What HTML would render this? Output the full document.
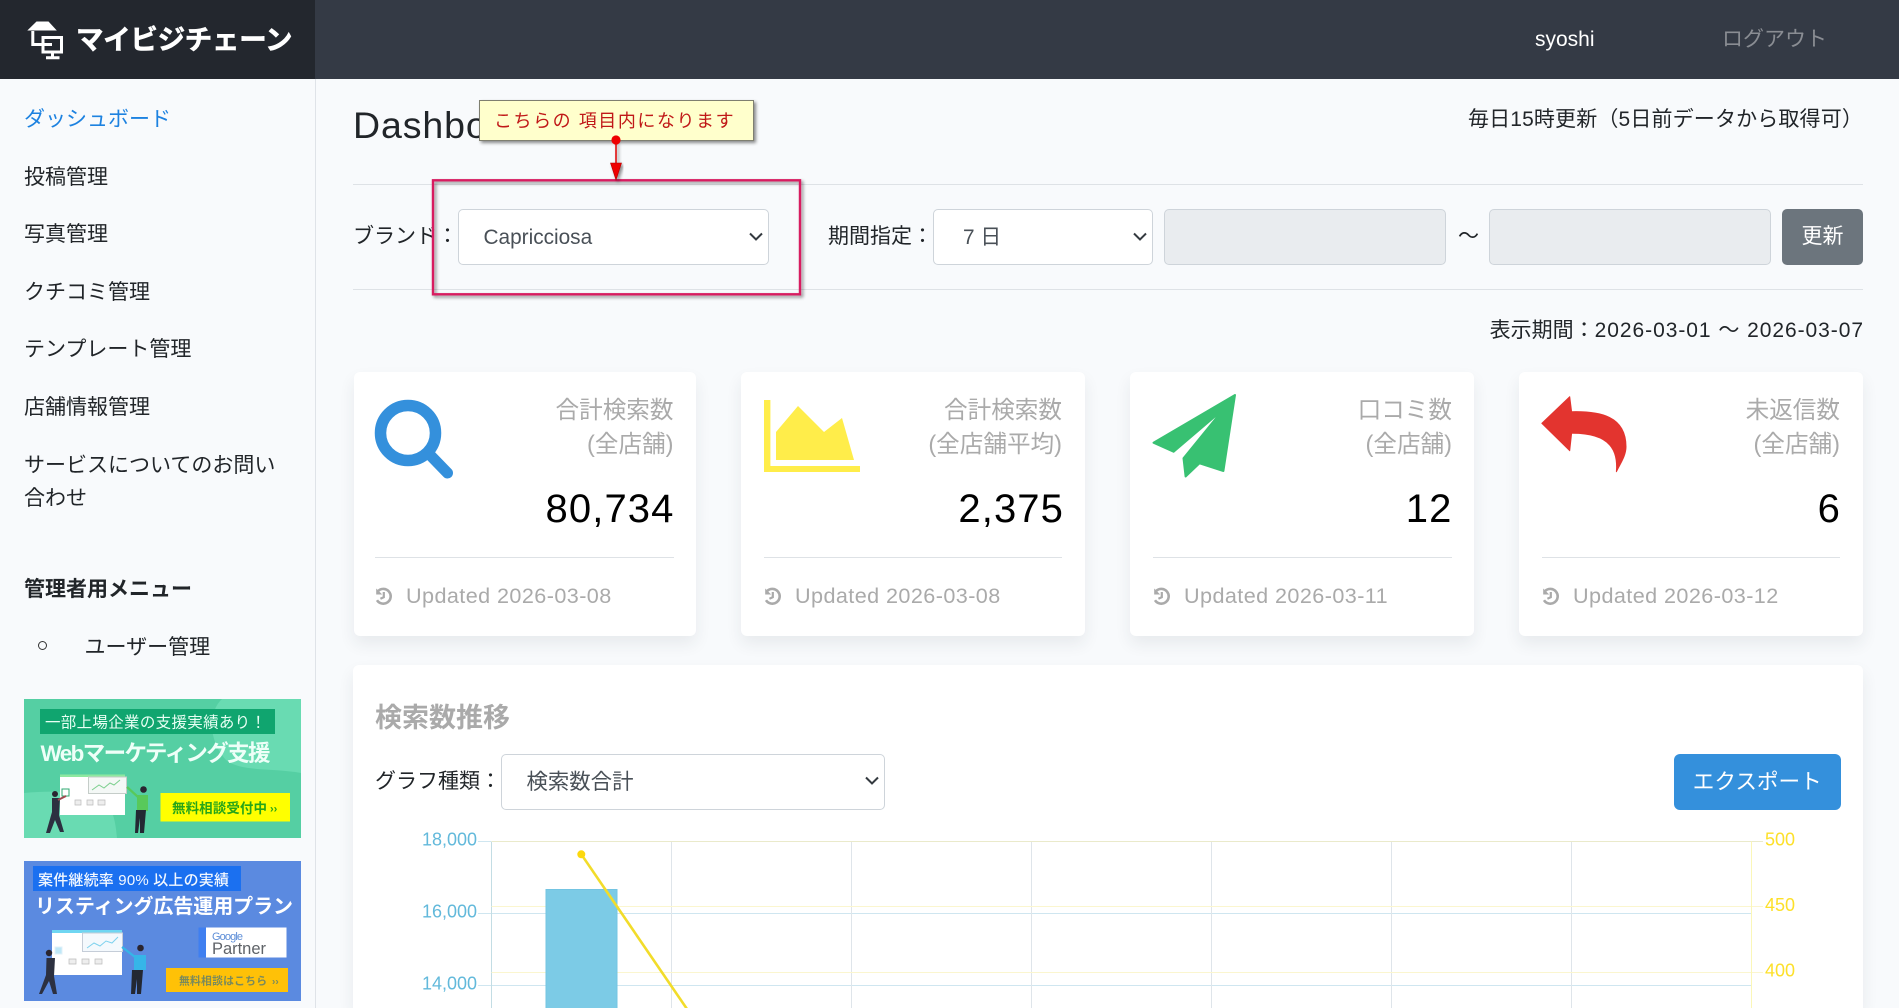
<!DOCTYPE html>
<html lang="ja"><head><meta charset="utf-8"><title>マイビジチェーン Dashboard</title>
<style>
*{box-sizing:border-box}
html,body{margin:0;padding:0;width:1899px;height:1008px;overflow:hidden;background:#f8fafc}
body{position:relative;font-family:"Liberation Sans","Noto Sans CJK JP",sans-serif;color:#212529;font-size:21px}
.a,.t{position:absolute}
.t{line-height:34px;height:34px;white-space:nowrap}
.r{text-align:right}
select,input{position:absolute;font:20.8px "Liberation Sans","Noto Sans CJK JP",sans-serif;color:#495057;background:#fff;border:1px solid #ced4da;border-radius:5px;height:56px;top:209px;margin:0;-webkit-appearance:none;appearance:none}
input{background:#e9ecef}
.card{position:absolute;top:372px;height:264px;background:#fff;border-radius:6px;box-shadow:0 8px 16px rgba(40,50,70,.08)}
.lab{color:#aaa;font-size:23.6px}
.num{color:#000;font-size:40px;line-height:50px;height:50px;letter-spacing:1.1px}
.upd{color:#aaa;font-size:21.6px}
.hl{position:absolute;height:1px;background:#dee2e6}
.chev{position:absolute;fill:none;stroke:#343a40;stroke-width:2}
</style></head><body>

<div class="a" style="left:0;top:0;width:1899px;height:79px;background:#343a45"></div>
<div class="a" style="left:0;top:0;width:315px;height:79px;background:#23272e"></div>
<svg class="a" style="left:25px;top:19px" width="42" height="42" viewBox="25 19 42 42">
<path d="M36.5 21.5H48.5L56.8 30.5H27.3Z" fill="#fff"/>
<path d="M32.8 31V44.5H52" fill="none" stroke="#fff" stroke-width="3"/>
<path d="M43 45.5V37.5H61.5V52H43V45" fill="none" stroke="#fff" stroke-width="3"/>
<path d="M52.5 52V56.5M46 57.8H59.5" fill="none" stroke="#fff" stroke-width="3"/>
</svg>
<div class="t" style="left:76px;top:23px;font-size:27.5px;font-weight:700;color:#fff;letter-spacing:-.3px;-webkit-text-stroke:.6px #fff">マイビジチェーン</div>
<div class="t" style="left:1535px;top:23px;color:#fff">syoshi</div>
<div class="t" style="left:1722px;top:23px;color:#8a8d93">ログアウト</div>

<div class="a" style="left:315px;top:79px;width:1px;height:929px;background:#dfe3e8"></div>
<div class="t" style="left:24px;top:103px;color:#1d82e0">ダッシュボード</div>
<div class="t" style="left:24px;top:161px">投稿管理</div>
<div class="t" style="left:24px;top:218px">写真管理</div>
<div class="t" style="left:24px;top:276px">クチコミ管理</div>
<div class="t" style="left:24px;top:333px">テンプレート管理</div>
<div class="t" style="left:24px;top:391px">店舗情報管理</div>
<div class="t" style="left:24px;top:449px">サービスについてのお問い</div>
<div class="t" style="left:24px;top:482px">合わせ</div>
<div class="t" style="left:24px;top:573px;font-weight:700">管理者用メニュー</div>
<div class="a" style="left:38px;top:641px;width:9px;height:9px;border:1.3px solid #333;border-radius:50%"></div>
<div class="t" style="left:84.5px;top:631px">ユーザー管理</div>

<svg class="a" style="left:24px;top:699px;filter:blur(.35px)" width="277" height="139" viewBox="24 699 277 139" font-family="Liberation Sans,Noto Sans CJK JP,sans-serif">
<rect x="24" y="699" width="277" height="139" fill="#55cfa3"/>
<path d="M222 699C208 712 208 740 226 760C240 772 275 768 301 773V699Z" fill="#69dbb2"/>
<path d="M24 793C60 790 100 790 113 815C116 825 116 830 117 838H24Z" fill="#69dbb2"/>
<rect x="40" y="709" width="235" height="25" fill="#10a56f"/>
<text x="45" y="727.5" font-size="15.5" fill="#e8fff4" textLength="221">一部上場企業の支援実績あり！</text>
<text x="40.5" y="761" font-size="22.5" font-weight="700" fill="#eefff8" textLength="230">Webマーケティング支援</text>
<rect x="60" y="774.5" width="65" height="3" fill="#8ee8a0"/>
<rect x="60" y="777" width="65" height="38" fill="#fff"/>
<rect x="88.5" y="777" width="38" height="16.5" fill="#f4f8f6" stroke="#c5cdc9" stroke-width="1"/>
<path d="M92 790L99 785L104 788L110 783L114 785L120 780" fill="none" stroke="#7ccf8e" stroke-width="1"/>
<path d="M75 800h6v5h-6zM87 800h6v5h-6zM98 800h7v5h-7z" fill="#eee" stroke="#bbb" stroke-width=".7"/>
<rect x="62" y="789" width="7" height="7" fill="#fff" stroke="#2faa70"/>
<circle cx="55" cy="794" r="3" fill="#2a2530"/>
<path d="M52 798H60L59 815L64 832H60L55 820L50 833H46L52 812Z" fill="#2c3040"/>
<path d="M58 800L66 796" stroke="#a04a50" stroke-width="2"/>
<circle cx="143.5" cy="789.5" r="3.3" fill="#2a2530"/>
<path d="M137 795H148L148 811H137Z" fill="#58c95a"/>
<path d="M127 787L138 797" stroke="#58c95a" stroke-width="2.2"/>
<path d="M136 810H146L144 833H140L140 818L138 833H135Z" fill="#232833"/>
<rect x="160.5" y="793" width="129.5" height="28.5" fill="#ffff00"/>
<text x="172" y="813" font-size="13.5" font-weight="700" fill="#27a518" textLength="95">無料相談受付中</text>
<text x="270" y="812.5" font-size="11" font-weight="700" fill="#27a518">››</text>
</svg>

<svg class="a" style="left:24px;top:861px;filter:blur(.35px)" width="277" height="140" viewBox="24 861 277 140" font-family="Liberation Sans,Noto Sans CJK JP,sans-serif">
<rect x="24" y="861" width="277" height="140" fill="#5b8ae0"/>
<rect x="33" y="866" width="208" height="25" fill="#1b70f0"/>
<text x="38" y="885" font-size="15" font-weight="500" fill="#f3f8ff" textLength="191">案件継続率 90% 以上の実績</text>
<text x="35" y="913" font-size="20" font-weight="700" fill="#fff" textLength="258">リスティング広告運用プラン</text>
<rect x="52" y="930" width="70" height="3" fill="#6fd6f2"/>
<rect x="52" y="933" width="70" height="42" fill="#fff"/>
<rect x="82.5" y="933" width="40" height="18.5" fill="#f4f9fd" stroke="#c5cdd8" stroke-width="1"/>
<path d="M87 948L94 943L100 946L106 941L112 943L118 937" fill="none" stroke="#7fd2ee" stroke-width="1"/>
<path d="M69 959h7v5h-7zM82 959h7v5h-7zM95 959h7v5h-7z" fill="#eee" stroke="#bbb" stroke-width=".7"/>
<rect x="55" y="947" width="7" height="7" fill="#bfe8f7" stroke="#e0f0fa"/>
<circle cx="49" cy="953" r="3.2" fill="#2a2530"/>
<path d="M46.5 958H55L54 976L57 994H53L49 981L42 994H39L46 975Z" fill="#2c3040"/>
<circle cx="140.5" cy="948" r="3.3" fill="#2a2530"/>
<path d="M134 955H146L146 970H134Z" fill="#36b5e8"/>
<path d="M122 947L135 957" stroke="#36b5e8" stroke-width="2.2"/>
<path d="M132 970H143L141 994H137L137 979L135 994H131Z" fill="#232833"/>
<rect x="198.5" y="927.5" width="8" height="30" fill="#3f7ff0"/>
<rect x="206" y="927.5" width="80.5" height="30" fill="#fff"/>
<text x="212" y="940" font-size="11" fill="#5f8fd8" textLength="31" lengthAdjust="spacing">Google</text>
<text x="212" y="954" font-size="16.5" fill="#5f6368" textLength="54">Partner</text>
<rect x="166" y="968" width="122" height="24" fill="#ffc107"/>
<text x="179" y="984.5" font-size="10.8" font-weight="700" fill="#7a8a5c" textLength="88">無料相談はこちら</text>
<text x="272" y="984.5" font-size="10" font-weight="700" fill="#7a8a5c">››</text>
</svg>

<div class="t" style="left:353px;top:102px;font-size:37.5px;line-height:46px;height:46px;letter-spacing:.9px">Dashboard</div>
<div class="t r" style="right:36px;top:103px;letter-spacing:.15px">毎日15時更新（5日前データから取得可）</div>
<div class="hl" style="left:353px;width:1510px;top:184px"></div>
<div class="hl" style="left:353px;width:1510px;top:289px"></div>

<div class="t" style="left:353px;top:219.5px">ブランド：</div>
<select style="left:458px;width:311px;padding-left:24.5px"><option>Capricciosa</option></select>
<svg class="chev" style="left:749px;top:232px" width="14" height="10"><path d="M1 1.5L7 7.5L13 1.5"/></svg>
<div class="t" style="left:828px;top:219.5px">期間指定：</div>
<select style="left:933px;width:220px;padding-left:29px"><option>7 日</option></select>
<svg class="chev" style="left:1133px;top:232px" width="14" height="10"><path d="M1 1.5L7 7.5L13 1.5"/></svg>
<input disabled style="left:1164px;width:282px">
<div class="t" style="left:1458px;top:219.5px">〜</div>
<input disabled style="left:1489px;width:282px">
<div class="a" style="left:1782px;top:209px;width:81px;height:56px;background:#6c757d;border-radius:5px;color:#fff;text-align:center;line-height:55px">更新</div>
<div class="t r" style="right:36px;top:314px">表示期間：<span style="letter-spacing:.95px;margin-right:-1px">2026-03-01 〜 2026-03-07</span></div>

<div class="card" style="left:353.5px;width:342px"></div>
<div class="card" style="left:741px;width:344px"></div>
<div class="card" style="left:1130px;width:344px"></div>
<div class="card" style="left:1519px;width:344px"></div>

<svg class="a" style="left:0;top:380px" width="1899" height="110" viewBox="0 380 1899 110">
<circle cx="408" cy="433" r="27.5" fill="none" stroke="#3490dc" stroke-width="11.5"/>
<path d="M431 456L447.5 473" stroke="#3490dc" stroke-width="11" stroke-linecap="round"/>
<path d="M764 400H770.4V466H860V472H764Z" fill="#ffed4a"/>
<path d="M776 460V432L798 406L824 432L842 418L854 460Z" fill="#ffed4a"/>
<path d="M1235 395L1153.5 442.7L1173.6 451.7L1223.4 409.3L1183.5 458.3L1185.6 476.5L1199.5 463.3L1223.4 471L1235 395Z" fill="#38c172" stroke="#38c172" stroke-width="2" stroke-linejoin="round"/>
<path d="M1541.8 423.3L1569.7 396.7L1571.6 411.7C1600 411 1626 416 1626 446.7C1626 456 1620 464 1616.4 471.7C1618 452 1612 433 1571.6 433.3L1569.7 450.7Z" fill="#e3342f" stroke="#e3342f" stroke-width="1" stroke-linejoin="round"/>
</svg>

<div class="t r lab" style="left:353px;width:320.5px;top:393.5px">合計検索数</div>
<div class="t r lab" style="left:353px;width:320.5px;top:427.5px">(全店舗)</div>
<div class="t r num" style="left:353px;width:321.5px;top:484px">80,734</div>
<div class="hl" style="left:375px;width:298.5px;top:557px"></div>
<div class="t r lab" style="left:741px;width:321px;top:393.5px">合計検索数</div>
<div class="t r lab" style="left:741px;width:321px;top:427.5px">(全店舗平均)</div>
<div class="t r num" style="left:741px;width:323px;top:484px">2,375</div>
<div class="hl" style="left:764px;width:298px;top:557px"></div>
<div class="t r lab" style="left:1130px;width:322px;top:393.5px">口コミ数</div>
<div class="t r lab" style="left:1130px;width:322px;top:427.5px">(全店舗)</div>
<div class="t r num" style="left:1130px;width:322.5px;top:484px">12</div>
<div class="hl" style="left:1153px;width:299px;top:557px"></div>
<div class="t r lab" style="left:1519px;width:321px;top:393.5px">未返信数</div>
<div class="t r lab" style="left:1519px;width:321px;top:427.5px">(全店舗)</div>
<div class="t r num" style="left:1519px;width:322px;top:484px">6</div>
<div class="hl" style="left:1542px;width:298px;top:557px"></div>

<svg width="0" height="0" style="position:absolute"><defs><g id="h"><path d="M2.2 1.5V7.5H8.2Z" fill="#aaa"/><path d="M4.3 3.8A7.4 7.4 0 1 1 3 13.2" fill="none" stroke="#aaa" stroke-width="2.6"/><path d="M9.8 5V10.2L6.4 11.8" fill="none" stroke="#aaa" stroke-width="2.2"/></g></defs></svg>
<svg class="a" style="left:374px;top:587px" width="19" height="18"><use href="#h"/></svg>
<svg class="a" style="left:763px;top:587px" width="19" height="18"><use href="#h"/></svg>
<svg class="a" style="left:1152px;top:587px" width="19" height="18"><use href="#h"/></svg>
<svg class="a" style="left:1541px;top:587px" width="19" height="18"><use href="#h"/></svg>
<div class="t upd" style="left:406px;top:579px;letter-spacing:.42px">Updated 2026-03-08</div>
<div class="t upd" style="left:795px;top:579px;letter-spacing:.42px">Updated 2026-03-08</div>
<div class="t upd" style="left:1184px;top:579px;letter-spacing:.42px">Updated 2026-03-11</div>
<div class="t upd" style="left:1573px;top:579px;letter-spacing:.42px">Updated 2026-03-12</div>

<div class="a" style="left:353px;top:665px;width:1510px;height:343px;background:#fff;border-radius:6px 6px 0 0;box-shadow:0 8px 16px rgba(40,50,70,.08)"></div>
<div class="t" style="left:375px;top:701px;font-size:27px;font-weight:700;color:#aaa">検索数推移</div>
<div class="t" style="left:375px;top:764.5px">グラフ種類：</div>
<select style="left:501px;top:753.5px;width:384px;padding-left:24.5px;font-size:21.4px"><option>検索数合計</option></select>
<svg class="chev" style="left:865px;top:776px" width="14" height="10"><path d="M1 1.5L7 7.5L13 1.5"/></svg>
<div class="a" style="left:1674px;top:754px;width:166.5px;height:56px;background:#3490dc;border-radius:6px;color:#fff;text-align:center;line-height:55px;font-size:21.6px">エクスポート</div>

<svg class="a" style="left:353px;top:820px" width="1510" height="188" viewBox="353 820 1510 188" font-family="Liberation Sans,sans-serif">
<g fill="none" stroke-width="1">
<path d="M478 913.5H1751.5M478 985.5H1751.5" stroke="#cfe6f0"/>
<path d="M491.5 841.5V1008" stroke="#c3dde4"/>
<path d="M671.5 841.5V1008M851.5 841.5V1008M1031.5 841.5V1008M1211.5 841.5V1008M1391.5 841.5V1008M1571.5 841.5V1008" stroke="#dfe5ea"/>
<path d="M491.5 906.5H1763M491.5 972.5H1763" stroke="#fbf6cf"/>
<path d="M478 841.5H491" stroke="#cfe6f0"/>
<path d="M491.5 841.5H1763" stroke="#eaeacb"/>
<path d="M1751.5 841.5V1008" stroke="#fbf7b8"/>
</g>
<rect x="546" y="889.5" width="71" height="119" fill="#7ccbe6" stroke="#73c4e2"/>
<path d="M581.3 854.3L687 1009" stroke="#f2dc2a" stroke-width="2.6"/>
<circle cx="581.3" cy="854.3" r="4" fill="#fcd80c"/>
<g font-size="18" fill="#62b9db" text-anchor="end">
<text x="477" y="845.5">18,000</text><text x="477" y="917.5">16,000</text><text x="477" y="989.5">14,000</text>
</g>
<g font-size="18" fill="#fde02a">
<text x="1765" y="845.5">500</text><text x="1765" y="911">450</text><text x="1765" y="976.5">400</text>
</g>
</svg>

<svg class="a" style="left:425px;top:95px" width="450" height="215" viewBox="425 95 450 215">
<defs><filter id="s" x="-10%" y="-10%" width="125%" height="130%"><feDropShadow dx="2" dy="2" stdDeviation="1.6" flood-color="#000" flood-opacity=".45"/></filter></defs>
<rect x="433" y="180.3" width="367" height="114" fill="none" stroke="#d81b60" stroke-width="2.4" filter="url(#s)"/>
<g filter="url(#s)">
<path d="M616 140V164" stroke="#e00000" stroke-width="1.5"/>
<path d="M610.5 163H621.5L616 180Z" fill="#ee0000" stroke="#b00000" stroke-width=".6"/>
</g>
<rect x="479.5" y="100.5" width="274" height="40" fill="#ffffcc" stroke="#7f7f70" filter="url(#s)"/>
<text x="494" y="127" font-size="18" letter-spacing="1.55" fill="#c01818" font-family="Liberation Sans,Noto Sans CJK JP,sans-serif">こちらの 項目内になります</text>
<circle cx="616" cy="140" r="4.6" fill="#ee0000"/>
</svg>
</body></html>
